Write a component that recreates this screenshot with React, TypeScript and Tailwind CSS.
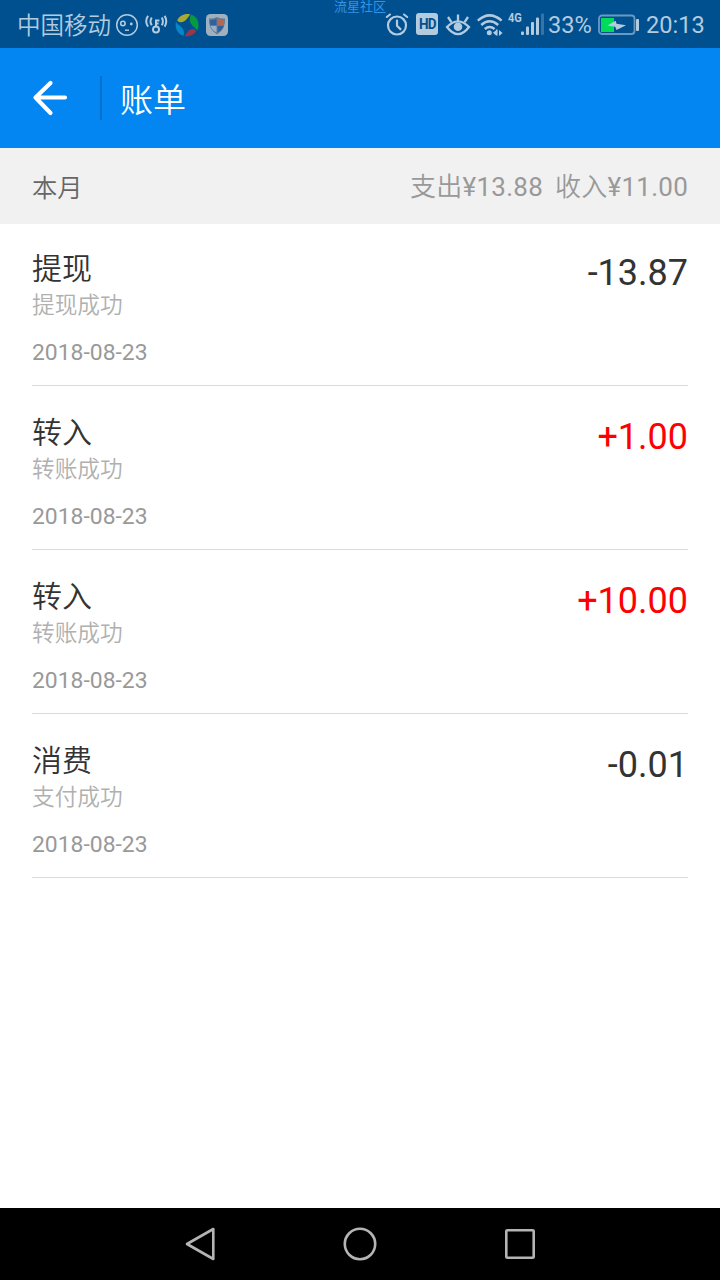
type Bill = {
  id: number;
  title: string;
  status: string;
  date: string;
  amount: string;
};

const bills: Bill[] = [
  { id: 1, title: "提现", status: "提现成功", date: "2018-08-23", amount: "-13.87" },
  { id: 2, title: "转入", status: "转账成功", date: "2018-08-23", amount: "+1.00" },
  { id: 3, title: "转入", status: "转账成功", date: "2018-08-23", amount: "+10.00" },
  { id: 4, title: "消费", status: "支付成功", date: "2018-08-23", amount: "-0.01" },
];

function FaceIcon() {
  return (
    <svg className="ml-[5px] h-[24px] w-[24px]" viewBox="0 0 24 24" fill="none" stroke="#b2cbdf">
      <circle cx="12" cy="12" r="10.3" strokeWidth="1.5" />
      <circle cx="7.9" cy="10.5" r="2.2" strokeWidth="1.6" />
      <circle cx="16.3" cy="11" r="1.4" fill="#b2cbdf" stroke="none" />
      <path d="M10 17.2h4" strokeWidth="1.4" />
    </svg>
  );
}

function HotspotKeyIcon() {
  return (
    <svg className="ml-[5px] h-[24px] w-[24px]" viewBox="0 0 24 24" fill="none" stroke="#b2cbdf" strokeWidth="2">
      <circle cx="12" cy="16.4" r="3" />
      <path d="M12 13.4V6.5M12 7.4h3.4M12 10.6h2.6" />
      <path d="M7.8 4.6q-2.6 3.8 0 7.6M4.1 2.9q-3.8 5.3 0 10.7" />
      <path d="M17.8 4.6q2.2 3.8 0 7.6M20.6 2.9q3.4 5.3 0 10.7" />
    </svg>
  );
}

function PinwheelIcon() {
  return (
    <svg className="ml-[7px] h-[24px] w-[24px]" viewBox="0 0 24 24">
      <path d="M2.2 7.4C4.4 2.8 9.5.2 15.2 1.4 13 3.8 11.6 7.2 8.2 8.8 5.9 9.8 3.6 9 2.2 7.4z" fill="#a9aa35" />
      <path d="M16 1.6c4.8 1.6 7.7 5.8 7.5 11.4-.1 2-.7 3.4-1.5 4.5-1.4-2.8-4.8-4.2-6.4-7.5-1.3-3-.9-5.8.4-8.4z" fill="#079b3f" />
      <path d="M1.1 8.3c.4 3 4.1 4.1 6.3 7 1.8 2.4 1.9 5 1.2 7.3C3.3 21.5-.8 15.7 1.1 8.3z" fill="#0786c5" />
      <path d="M9.7 23c2-2 2.8-5.4 5.9-6.7 2.1-.8 4.3-.3 5.6 1.7-2.1 3.9-6.8 6-11.5 5z" fill="#9b3547" />
    </svg>
  );
}

function ShieldIcon() {
  return (
    <svg className="ml-[6px] h-[24px] w-[24px]" viewBox="0 0 24 24">
      <rect x="1" y="1" width="22" height="22" rx="4.5" fill="#9fb0bf" />
      <path d="M12 4q4 2 8 1.5Q21 16 12 21.5 3 16 4 5.5 8 6 12 4z" fill="#657b92" />
      <path d="M11.5 5.8v6.1H5.2V7q3.2.2 6.3-1.2z" fill="#2d61a0" />
      <path d="M12.6 5.6Q15.7 7 19 6.8v5.1h-6.4z" fill="#b36757" />
      <path d="M5.5 13h6v6.5Q7 17 5.5 13z" fill="#9aafc7" />
      <path d="M12.6 13h6q-1.4 4-6 6.5z" fill="#2d61a0" />
    </svg>
  );
}

function AlarmIcon() {
  return (
    <svg className="h-[24px] w-[24px]" viewBox="0 0 24 24" fill="none" stroke="#b2cbdf" strokeLinecap="round">
      <circle cx="12" cy="12.5" r="9" strokeWidth="2.2" />
      <path d="M12 7.5v5.2l3.4 3.4" strokeWidth="2.2" />
      <path d="M1.8 4 5 1.5M22.2 4 19 1.5" strokeWidth="2.1" />
    </svg>
  );
}

function EyeIcon() {
  return (
    <svg className="ml-[7px] h-[24px] w-[26px]" viewBox="0 0 26 24" fill="none" stroke="#b2cbdf" strokeWidth="2.3">
      <path d="M2 14Q13 2.6 24 14 13 28.4 2 14z" />
      <circle cx="13" cy="13.8" r="4.3" fill="#b2cbdf" stroke="none" />
      <path d="M13 8V1.5M6.4 9.2 3 4M19.6 9.2 23 4" />
    </svg>
  );
}

function WifiIcon() {
  return (
    <svg className="ml-[5px] h-[24px] w-[28px]" viewBox="0 0 28 24" fill="none" stroke="#b2cbdf" strokeWidth="2.5">
      <path d="M1.8 7.6q11.7-10.4 23.8 0M5.2 12q8.4-7.4 17 0M8.8 16q4.8-4 9.8 0" />
      <circle cx="13.3" cy="19.8" r="2.5" fill="#b2cbdf" stroke="none" />
      <path d="m17 19.8 3.4-2.8v5.8zM20 16.6h1.6v6H20zM23 17v6l3.6-3z" fill="#b2cbdf" stroke="none" />
    </svg>
  );
}

function SignalIcon() {
  return (
    <svg className="h-[24px] w-[23px]" viewBox="0 0 23 24" fill="#b2cbdf">
      <rect x="0" y="18.5" width="3" height="3.5" rx="1" />
      <rect x="5" y="13.5" width="3" height="8.5" rx="1" />
      <rect x="10" y="9" width="3" height="13" rx="1" />
      <rect x="15" y="4.5" width="3" height="17.5" rx="1" />
      <rect x="20" y="0.5" width="3" height="21.5" rx="1" opacity="0.3" />
    </svg>
  );
}

function BatteryIcon() {
  return (
    <svg className="h-[24px] w-[42px]" viewBox="0 0 42 24">
      <rect x="1" y="2.5" width="35.5" height="18.5" rx="3" fill="none" stroke="#6b9ac0" strokeWidth="1.8" />
      <rect x="3" y="5" width="13" height="14" fill="#00dc5a" />
      <rect x="38" y="6" width="3" height="12" rx="1" fill="#b2cbdf" />
      <path d="M9.5 12.6 17.7 7.8l.8 3 9.5 1.4-9.5 4.8-1.3-3.2z" fill="#b2cbdf" />
    </svg>
  );
}

function StatusBar() {
  return (
    <div className="relative flex h-12 items-center justify-between bg-[#00508f] pr-[15px] pl-[17px] pt-[2px] text-[#b2cbdf]">
      <div className="flex items-center">
        <span className="w-[93px] pt-[2px] text-[23.5px] leading-6 font-[350] whitespace-nowrap">中国移动</span>
        <FaceIcon />
        <HotspotKeyIcon />
        <PinwheelIcon />
        <ShieldIcon />
      </div>
      <span className="absolute top-0 left-[334px] text-[13px] leading-[13px] text-[#2f94ea]">
        流星社区
      </span>
      <div className="flex items-center">
        <AlarmIcon />
        <span className="mb-[2px] ml-[7px] flex h-[22px] w-[22px] items-center justify-center rounded-[3px] bg-[#b2cbdf] text-[15px] font-bold tracking-tighter text-[#00508f]">
          <span className="scale-x-90">HD</span>
        </span>
        <EyeIcon />
        <WifiIcon />
        <span className="mt-[-1px] ml-[4px] w-[13px] origin-left scale-x-85 self-start text-[13px] leading-[12px] font-bold">
          4G
        </span>
        <SignalIcon />
        <span className="ml-[4px] w-[44px] text-[23.6px] leading-6">33%</span>
        <span className="ml-[6px]">
          <BatteryIcon />
        </span>
        <span className="ml-[6px] w-[59px] text-[23.6px] leading-6">20:13</span>
      </div>
    </div>
  );
}

function Header() {
  return (
    <header className="flex h-[100px] items-center bg-[#0385f2] pl-8 text-white">
      <svg className="h-9 w-9" viewBox="0 0 36 36" fill="none" stroke="currentColor" strokeWidth="4.2" strokeLinecap="round" strokeLinejoin="round">
        <path d="M18.5 3 3.5 17.5 18.5 33M3.5 17.5H33" />
      </svg>
      <div className="ml-8 h-11 w-[2px] bg-[#0271cd]" />
      <h1 className="ml-[18px] pt-[6px] text-[33px] leading-10 font-[350]">账单</h1>
    </header>
  );
}

function BillRow({ bill }: { bill: Bill }) {
  const income = bill.amount.startsWith("+");

  return (
    <li className="flex h-[164px] items-start justify-between border-b border-[#dadada] pt-[27px] first:h-[162px] first:pt-[25px]">
      <div className="pt-[1px]">
        <p className="text-[30px] leading-[38px] font-[350] text-[#333]">{bill.title}</p>
        <p className="pt-[1px] text-[22.7px] leading-[34px] font-[350] text-[#b0b0b0]">{bill.status}</p>
        <p className="mt-[14px] text-[22.9px] leading-8 text-[#999]">{bill.date}</p>
      </div>
      <p className={income ? "text-[36px] leading-[48px] text-[#f00]" : "text-[36px] leading-[48px] text-[#333]"}>
        {bill.amount}
      </p>
    </li>
  );
}

function NavBar() {
  return (
    <nav className="flex h-[72px] items-center justify-center gap-[124px] bg-black">
      <svg className="h-9 w-9" viewBox="0 0 36 36" fill="none" stroke="#b4b4b4" strokeWidth="2.6" strokeLinejoin="round">
        <path d="M31.3 3v30L5 18z" />
      </svg>
      <svg className="h-9 w-9" viewBox="0 0 36 36" fill="none" stroke="#b4b4b4" strokeWidth="2.6">
        <circle cx="18" cy="18" r="15.2" />
      </svg>
      <svg className="h-9 w-9" viewBox="0 0 36 36" fill="none" stroke="#b4b4b4" strokeWidth="2.6">
        <rect x="4.3" y="4.3" width="27.4" height="27.4" rx="1" />
      </svg>
    </nav>
  );
}

export default function App() {
  return (
    <main className="flex h-[1280px] w-[720px] flex-col overflow-hidden bg-white font-[Roboto,'Noto_Sans_CJK_SC',sans-serif]">
      <StatusBar />
      <Header />
      <div className="flex h-[76px] items-center justify-between bg-[#f1f1f1] px-8 pt-[3px] text-[25.3px]">
        <span className="pt-[2px] font-[350] text-[#666]">本月</span>
        <span className="flex gap-[12px] text-[26px] tracking-[0.25px] text-[#999]">
          <span>
            <span className="font-[350]">支出</span>¥13.88
          </span>
          <span>
            <span className="font-[350]">收入</span>¥11.00
          </span>
        </span>
      </div>
      <ul className="flex-1 px-8">
        {bills.map((bill) => (
          <BillRow key={bill.id} bill={bill} />
        ))}
      </ul>
      <NavBar />
    </main>
  );
}
